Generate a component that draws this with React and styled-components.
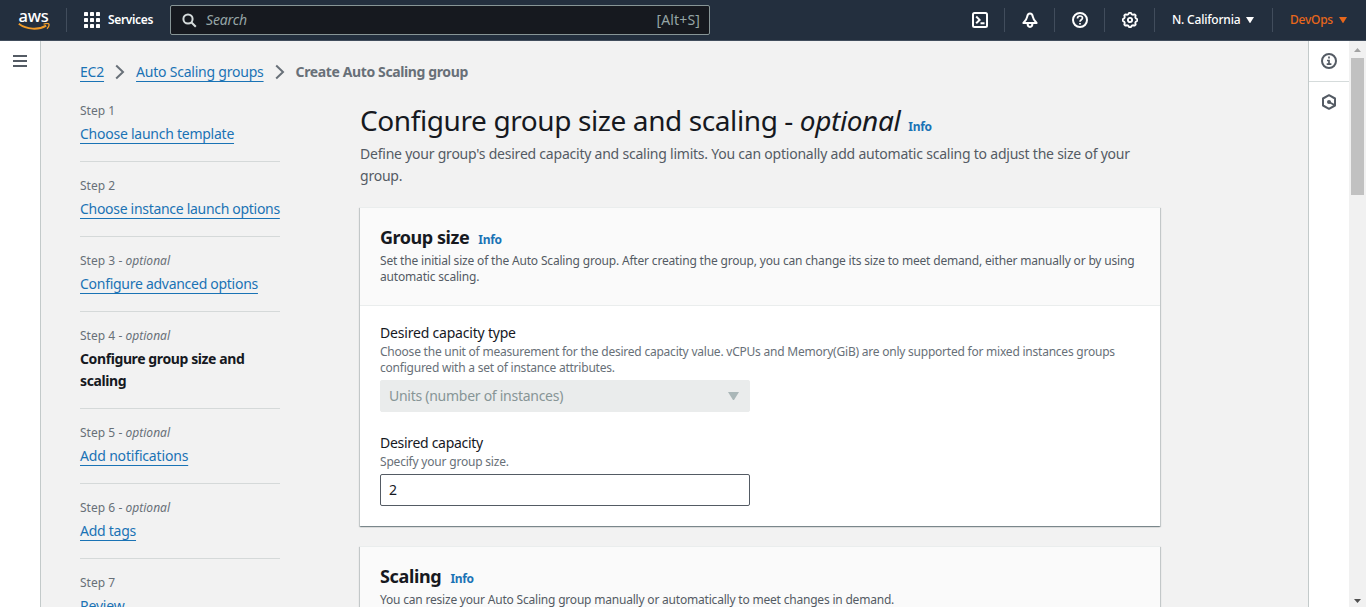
import React from 'react';
import styled, { createGlobalStyle } from 'styled-components';

const Global = createGlobalStyle`
  *, *::before, *::after { box-sizing: border-box; }
  body {
    margin: 0;
    background: #f2f2f2;
    color: #16191f;
    font: 14px/22px "Noto Sans", "Open Sans", sans-serif;
    overflow: hidden;
  }
  h1, h2, p, ol { margin: 0; padding: 0; }
`;

const Page = styled.div`
  display: flex;
  flex-direction: column;
  height: 100vh;
  overflow: hidden;
`;

const TopBar = styled.header`
  display: flex;
  flex: none;
  align-items: center;
  height: 41px;
  background: #232f3e;
  border-bottom: 1px solid #414d5c;
  color: #fff;
`;

const Brand = styled.div`
  display: flex;
  justify-content: center;
  width: 67px;
  height: 24px;
  padding-left: 1px;
  border-right: 1px solid #414d5c;
`;

const LogoMark = styled.div`
  display: flex;
  flex-direction: column;
  align-items: center;
  width: 34px;
  font-size: 16.5px;
  line-height: 15px;
  font-weight: 500;
  letter-spacing: -0.2px;
`;

const ServicesButton = styled.div`
  display: flex;
  align-items: center;
  gap: 8px;
  width: 103px;
  padding-left: 17px;
  font-size: 12px;
  font-weight: 600;
  letter-spacing: -0.35px;
`;

const SearchBox = styled.div`
  display: flex;
  align-items: center;
  width: 540px;
  height: 30px;
  padding: 0 9px 0 11px;
  border: 1px solid #879596;
  border-radius: 2px;
  background: #16191f;
  color: #95a5a6;
`;

const SearchPlaceholder = styled.span`
  flex: 1;
  padding-left: 9px;
  font-style: italic;
  letter-spacing: -0.15px;
`;

const Shortcut = styled.span`
  letter-spacing: 0.15px;
`;

const UtilityNav = styled.nav`
  display: flex;
  margin-left: auto;
`;

const IconCell = styled.div`
  display: flex;
  align-items: center;
  justify-content: center;
  width: 50px;
  height: 24px;
  padding-left: 1px;
  border-right: 1px solid #414d5c;
`;

const MenuCell = styled.div`
  display: flex;
  align-items: center;
  gap: 6px;
  width: ${(p) => p.$width}px;
  height: 24px;
  padding-left: 17px;
  border-right: ${(p) => (p.$last ? 'none' : '1px solid #414d5c')};
  color: ${(p) => (p.$accent ? '#e8671b' : '#fff')};
  font-size: 12px;
  font-weight: 500;
  letter-spacing: ${(p) => p.$track}px;
  white-space: nowrap;
`;

const Body = styled.div`
  display: flex;
  flex: 1;
  min-height: 0;
`;

const LeftRail = styled.aside`
  display: flex;
  flex: none;
  justify-content: center;
  width: 41px;
  padding-top: 14px;
  background: #fff;
  border-right: 1px solid #c3caca;
`;

const Main = styled.main`
  flex: 1;
  min-width: 0;
  padding: 20px 0 0 39px;
  overflow: hidden;
`;

const Breadcrumbs = styled.nav`
  display: flex;
  align-items: center;
  height: 22px;
  margin-bottom: 20px;
  white-space: nowrap;
`;

const Crumb = styled.span`
  letter-spacing: ${(p) => p.$track}px;
  color: ${(p) => (p.$current ? '#687078' : '#1a73b5')};
  font-weight: ${(p) => (p.$current ? 700 : 400)};
  text-decoration: ${(p) => (p.$current ? 'none' : 'underline 1px')};
  text-decoration-skip-ink: none;
  text-underline-offset: 4px;
`;

const CrumbArrow = styled.svg`
  flex: none;
  width: 10px;
  height: 16px;
  margin: 0 11px;
`;

const Columns = styled.div`
  display: flex;
  align-items: flex-start;
  gap: 80px;
`;

const Steps = styled.ol`
  flex: none;
  width: 200px;
  list-style: none;
`;

const Step = styled.li`
  padding-bottom: 16px;
  border-bottom: 1px solid #d5d9d9;
  & + & { padding-top: 16px; }
  &:last-child { border-bottom: none; }
`;

const StepLabel = styled.div`
  margin-bottom: 4px;
  color: #687078;
  font-size: 12px;
  line-height: 16px;
  letter-spacing: 0.03px;
`;

const StepName = styled.span`
  letter-spacing: ${(p) => p.$track}px;
  color: ${(p) => (p.$active ? '#16191f' : '#1a73b5')};
  font-weight: ${(p) => (p.$active ? 700 : 400)};
  text-decoration: ${(p) => (p.$active ? 'none' : 'underline 1px')};
  text-decoration-skip-ink: none;
  text-underline-offset: 4px;
  white-space: ${(p) => (p.$active ? 'pre-line' : 'nowrap')};
`;

const Content = styled.section`
  flex: none;
  width: 800px;
`;

const PageTitle = styled.h1`
  margin: -1px 0 5px;
  font-size: 28px;
  line-height: 36px;
  font-weight: 400;
  letter-spacing: -0.4px;
  white-space: nowrap;
`;

const PageIntro = styled.p`
  margin-bottom: 20px;
  color: #545b64;
  letter-spacing: -0.225px;
  white-space: pre;
`;

const InfoLink = styled.a`
  margin-left: ${(p) => p.$gap}px;
  color: #1a73b5;
  font-size: 12px;
  line-height: 16px;
  font-weight: 700;
  letter-spacing: -0.3px;
`;

const Card = styled.section`
  margin-bottom: 20px;
  border-top: 1px solid #eaeded;
  background: #fff;
  box-shadow: 0 1px 1px 0 rgba(0, 28, 36, 0.3), 1px 1px 1px 0 rgba(0, 28, 36, 0.15),
    -1px 1px 1px 0 rgba(0, 28, 36, 0.15);
`;

const CardHeader = styled.header`
  padding: 18px 20px 20px;
  background: #fafafa;
  border-bottom: 1px solid #eaeded;
`;

const CardTitle = styled.h2`
  margin-bottom: 5px;
  font-size: 18px;
  line-height: 22px;
  font-weight: 700;
  letter-spacing: ${(p) => p.$track}px;
`;

const SmallText = styled.p`
  color: ${(p) => (p.$hint ? '#687078' : '#545b64')};
  font-size: 12px;
  line-height: 16px;
  letter-spacing: ${(p) => p.$track}px;
  white-space: pre;
`;

const CardBody = styled.div`
  display: flex;
  flex-direction: column;
  gap: 20px;
  padding: 16px 20px 20px;
`;

const Label = styled.div`
  letter-spacing: ${(p) => p.$track}px;
`;

const Control = styled.div`
  display: flex;
  align-items: center;
  justify-content: space-between;
  width: 370px;
  height: 32px;
  margin-top: 4px;
  padding: 0 10px 0 8px;
  border: 1px solid ${(p) => (p.$disabled ? '#eaecec' : '#545b64')};
  border-radius: 2px;
  background: ${(p) => (p.$disabled ? '#eaecec' : '#fff')};
  color: ${(p) => (p.$disabled ? '#879596' : '#16191f')};
  letter-spacing: -0.27px;
`;

const RightRail = styled.aside`
  flex: none;
  width: 41px;
  background: #fff;
  border-left: 1px solid #c3caca;
`;

const RailButton = styled.div`
  display: flex;
  align-items: center;
  justify-content: center;
  height: ${(p) => (p.$last ? 40 : 41)}px;
  border-bottom: ${(p) => (p.$last ? 'none' : '1px solid #d5dbdb')};
`;

const ScrollTrack = styled.div`
  display: flex;
  flex: none;
  flex-direction: column;
  align-items: center;
  width: 17px;
  background: #f1f1f1;
`;

const ScrollArrow = styled.svg`
  flex: none;
  width: 17px;
  height: 17px;
`;

const ScrollThumb = styled.div`
  width: 13px;
  height: 137px;
  margin-bottom: auto;
  background: #c1c1c1;
`;

const AwsLogo = () => (
  <LogoMark>
    aws
    <svg width="34" height="9" viewBox="0 0 34 9" fill="none" stroke="#f19b27">
      <path d="M1.8 0.8C9.8 6.8 21.5 7.2 29.2 2.6" strokeWidth="1.9" />
      <path d="M26.6 1.2C29 0.4 31.4 0.4 31.9 1.1C32.3 2.1 31.4 4.4 30 5.8" strokeWidth="1.3" />
    </svg>
  </LogoMark>
);

const GridIcon = () => (
  <svg width="16" height="16" viewBox="0 0 16 16" fill="#fff">
    {[0, 6, 12].map((y) =>
      [0, 6, 12].map((x) => <rect key={`${x}-${y}`} x={x} y={y} width="4" height="4" rx="0.4" />)
    )}
  </svg>
);

const SearchIcon = () => (
  <svg width="15" height="15" viewBox="0 0 15 15" fill="none" stroke="#d5dbdb" strokeWidth="2">
    <circle cx="6" cy="6" r="4.6" />
    <path d="M9.3 9.3L13.8 13.8" />
  </svg>
);

const Stroked = ({ color = '#fff', children }) => (
  <svg width="16" height="16" viewBox="0 0 16 16" fill="none" stroke={color} strokeWidth="2" strokeLinejoin="round">
    {children}
  </svg>
);

const gearPoints = Array.from({ length: 32 }, (_, i) => {
  const r = i % 4 < 2 ? 7.3 : 6;
  const a = ((i - 0.5) * Math.PI) / 16 - Math.PI / 2;
  return `${(8 + r * Math.cos(a)).toFixed(2)},${(8 + r * Math.sin(a)).toFixed(2)}`;
}).join(' ');

const Caret = ({ size = 8, color = 'currentColor' }) => (
  <svg width={size} height={size * 0.8} viewBox="0 0 10 8">
    <path d="M0 0H10L5 8Z" fill={color} />
  </svg>
);

const steps = [
  { n: 1, name: 'Choose launch template', track: -0.25 },
  { n: 2, name: 'Choose instance launch options', track: -0.3 },
  { n: 3, name: 'Configure advanced options', track: -0.28 },
  { n: 4, name: 'Configure group size and\nscaling', track: -0.4, active: true },
  { n: 5, name: 'Add notifications', track: -0.17 },
  { n: 6, name: 'Add tags', track: -0.25 },
  { n: 7, name: 'Review', track: -0.2 },
].map((s) => ({ ...s, optional: s.n >= 3 && s.n <= 6 }));

export default function App() {
  return (
    <Page>
      <Global />
      <TopBar>
        <Brand><AwsLogo /></Brand>
        <ServicesButton><GridIcon />Services</ServicesButton>
        <SearchBox>
          <SearchIcon />
          <SearchPlaceholder>Search</SearchPlaceholder>
          <Shortcut>[Alt+S]</Shortcut>
        </SearchBox>
        <UtilityNav>
          <IconCell>
            <Stroked>
              <rect x="1" y="1" width="14" height="14" rx="1.5" />
              <path d="M4.2 4.5L7.6 7.9L4.2 11.3M8.5 11.3H12.5" strokeLinejoin="miter" />
            </Stroked>
          </IconCell>
          <IconCell>
            <Stroked>
              <path d="M8 1.4C6.4 1.4 5.5 2.7 5.2 4.6C4.8 7.2 3.4 9 1.4 11H14.6C12.6 9 11.2 7.2 10.8 4.6C10.5 2.7 9.6 1.4 8 1.4Z" />
              <path d="M5.6 11.5C5.6 13.6 6.6 14.9 8 14.9C9.4 14.9 10.4 13.6 10.4 11.5" />
            </Stroked>
          </IconCell>
          <IconCell>
            <Stroked>
              <circle cx="8" cy="8" r="7" />
              <path d="M5.5 6.4C5.5 4.8 6.5 4 8 4C9.5 4 10.5 4.9 10.5 6.1C10.5 7.8 8 7.8 8 9.8M8 10.9V12.6" strokeWidth="1.7" />
            </Stroked>
          </IconCell>
          <IconCell>
            <Stroked>
              <polygon points={gearPoints} strokeWidth="1.9" />
              <circle cx="8" cy="8" r="2.1" strokeWidth="1.9" />
            </Stroked>
          </IconCell>
          <MenuCell $width={118} $track={-0.2}>N. California<Caret /></MenuCell>
          <MenuCell $width={93} $track={-0.25} $accent $last>DevOps<Caret /></MenuCell>
        </UtilityNav>
      </TopBar>
      <Body>
        <LeftRail>
          <svg width="14" height="12" viewBox="0 0 14 12" fill="#545b64">
            <rect width="14" height="2" />
            <rect y="5" width="14" height="2" />
            <rect y="10" width="14" height="2" />
          </svg>
        </LeftRail>
        <Main>
          <Breadcrumbs>
            <Crumb $track={-0.2}>EC2</Crumb>
            <CrumbArrow viewBox="0 0 10 16"><path d="M1.2 1.5L8 8L1.2 14.5" fill="none" stroke="#687078" strokeWidth="2" /></CrumbArrow>
            <Crumb $track={-0.22}>Auto Scaling groups</Crumb>
            <CrumbArrow viewBox="0 0 10 16"><path d="M1.2 1.5L8 8L1.2 14.5" fill="none" stroke="#687078" strokeWidth="2" /></CrumbArrow>
            <Crumb $track={-0.38} $current>Create Auto Scaling group</Crumb>
          </Breadcrumbs>
          <Columns>
            <Steps>
              {steps.map((s) => (
                <Step key={s.n}>
                  <StepLabel>Step {s.n}{s.optional && <> - <i>optional</i></>}</StepLabel>
                  <StepName $active={s.active} $track={s.track}>{s.name}</StepName>
                </Step>
              ))}
            </Steps>
            <Content>
              <PageTitle>
                Configure group size and scaling - <i>optional</i>
                <InfoLink $gap={8}>Info</InfoLink>
              </PageTitle>
              <PageIntro>
                {"Define your group's desired capacity and scaling limits. You can optionally add automatic scaling to adjust the size of your\ngroup."}
              </PageIntro>
              <Card>
                <CardHeader>
                  <CardTitle $track={-0.45}>Group size<InfoLink $gap={9}>Info</InfoLink></CardTitle>
                  <SmallText $track={-0.177}>
                    {'Set the initial size of the Auto Scaling group. After creating the group, you can change its size to meet demand, either manually or by using\nautomatic scaling.'}
                  </SmallText>
                </CardHeader>
                <CardBody>
                  <div>
                    <Label $track={-0.2}>Desired capacity type</Label>
                    <SmallText $hint $track={-0.225}>
                      {'Choose the unit of measurement for the desired capacity value. vCPUs and Memory(GiB) are only supported for mixed instances groups\nconfigured with a set of instance attributes.'}
                    </SmallText>
                    <Control $disabled>Units (number of instances)<Caret size={11} color="#aab7b8" /></Control>
                  </div>
                  <div>
                    <Label $track={-0.3}>Desired capacity</Label>
                    <SmallText $hint $track={-0.2}>Specify your group size.</SmallText>
                    <Control>2</Control>
                  </div>
                </CardBody>
              </Card>
              <Card>
                <CardHeader>
                  <CardTitle $track={-0.35}>Scaling<InfoLink $gap={9}>Info</InfoLink></CardTitle>
                  <SmallText $track={-0.2}>You can resize your Auto Scaling group manually or automatically to meet changes in demand.</SmallText>
                </CardHeader>
              </Card>
            </Content>
          </Columns>
        </Main>
        <RightRail>
          <RailButton>
            <Stroked color="#545b64">
              <circle cx="8" cy="8" r="7" />
              <path d="M8 3.6V5.4M6 7.5H8V11M5.7 11.2H10.4" strokeWidth="1.7" strokeLinejoin="miter" />
            </Stroked>
          </RailButton>
          <RailButton $last>
            <Stroked color="#545b64">
              <path d="M8 1.2L14 4.5V11.5L8 14.8L2 11.5V4.5Z" />
              <circle cx="8" cy="8" r="2" fill="#545b64" stroke="none" />
              <path d="M8 8L13.4 11" />
            </Stroked>
          </RailButton>
        </RightRail>
        <ScrollTrack>
          <ScrollArrow viewBox="0 0 17 17"><path d="M5 11H12L8.5 7Z" fill="#a3a3a3" /></ScrollArrow>
          <ScrollThumb />
          <ScrollArrow viewBox="0 0 17 17"><path d="M5 9H12L8.5 13Z" fill="#505050" /></ScrollArrow>
        </ScrollTrack>
      </Body>
    </Page>
  );
}
